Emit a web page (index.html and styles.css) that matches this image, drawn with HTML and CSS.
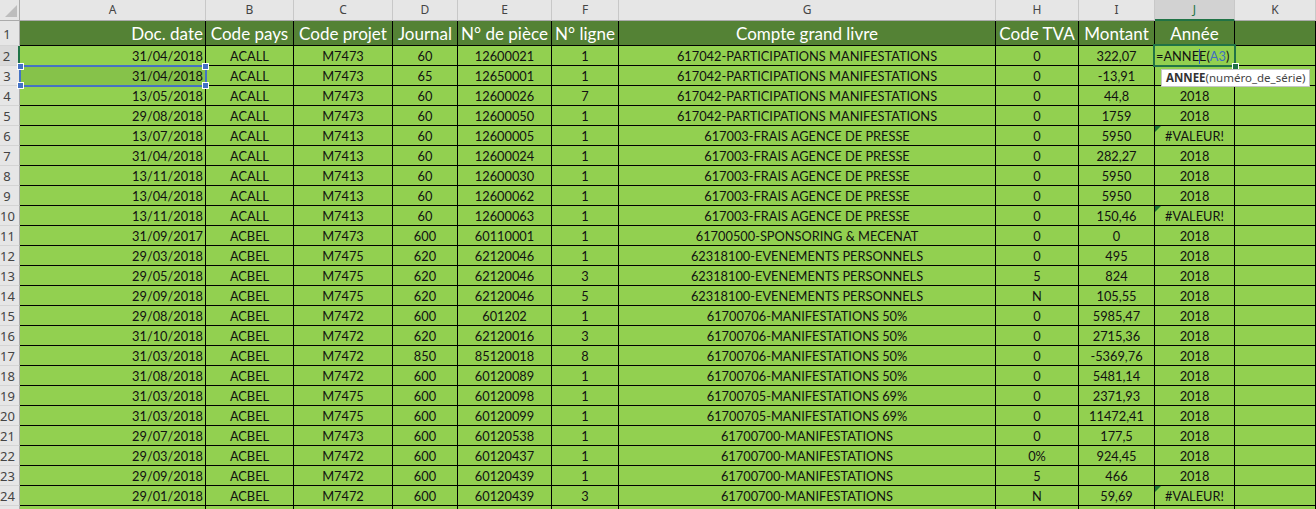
FILE: index.html
```html
<!DOCTYPE html>
<html lang="fr">
<head>
<meta charset="utf-8">
<title>Classeur</title>
<link rel="stylesheet" href="styles.css">
</head>
<body>
<div class="sheet">
  <div class="row colhead">
    <div class="corner"><svg width="19" height="20" viewBox="0 0 19 20"><polygon points="17,5 17,17 5,17" fill="#bdbdbd"/></svg></div>
    <div>A</div><div>B</div><div>C</div><div>D</div><div>E</div><div>F</div><div>G</div><div>H</div><div>I</div><div class="sel">J</div><div>K</div>
  </div>
  <div class="row hdr">
    <div class="rh">1</div>
    <div class="r">Doc. date</div><div>Code pays</div><div>Code projet</div><div>Journal</div><div>N° de pièce</div><div>N° ligne</div><div>Compte grand livre</div><div>Code TVA</div><div>Montant</div><div>Année</div><div></div>
  </div>
  <div class="row data">
    <div class="rh act">2</div>
    <div class="r">31/04/2018</div><div>ACALL</div><div>M7473</div><div>60</div><div>12600021</div><div>1</div><div>617042-PARTICIPATIONS MANIFESTATIONS</div><div>0</div><div>322,07</div><div class="l edit">=ANNE<span class="caret"></span>E(<span class="ref">A3</span>)</div><div></div>
  </div>
  <div class="row data">
    <div class="rh">3</div>
    <div class="r selcell">31/04/2018</div><div>ACALL</div><div>M7473</div><div>65</div><div>12650001</div><div>1</div><div>617042-PARTICIPATIONS MANIFESTATIONS</div><div>0</div><div>-13,91</div><div></div><div></div>
  </div>
  <div class="row data">
    <div class="rh">4</div>
    <div class="r">13/05/2018</div><div>ACALL</div><div>M7473</div><div>60</div><div>12600026</div><div>7</div><div>617042-PARTICIPATIONS MANIFESTATIONS</div><div>0</div><div>44,8</div><div>2018</div><div></div>
  </div>
  <div class="row data">
    <div class="rh">5</div>
    <div class="r">29/08/2018</div><div>ACALL</div><div>M7473</div><div>60</div><div>12600050</div><div>1</div><div>617042-PARTICIPATIONS MANIFESTATIONS</div><div>0</div><div>1759</div><div>2018</div><div></div>
  </div>
  <div class="row data">
    <div class="rh">6</div>
    <div class="r">13/07/2018</div><div>ACALL</div><div>M7413</div><div>60</div><div>12600005</div><div>1</div><div>617003-FRAIS AGENCE DE PRESSE</div><div>0</div><div>5950</div><div class="err">#VALEUR!</div><div></div>
  </div>
  <div class="row data">
    <div class="rh">7</div>
    <div class="r">31/04/2018</div><div>ACALL</div><div>M7413</div><div>60</div><div>12600024</div><div>1</div><div>617003-FRAIS AGENCE DE PRESSE</div><div>0</div><div>282,27</div><div>2018</div><div></div>
  </div>
  <div class="row data">
    <div class="rh">8</div>
    <div class="r">13/11/2018</div><div>ACALL</div><div>M7413</div><div>60</div><div>12600030</div><div>1</div><div>617003-FRAIS AGENCE DE PRESSE</div><div>0</div><div>5950</div><div>2018</div><div></div>
  </div>
  <div class="row data">
    <div class="rh">9</div>
    <div class="r">13/04/2018</div><div>ACALL</div><div>M7413</div><div>60</div><div>12600062</div><div>1</div><div>617003-FRAIS AGENCE DE PRESSE</div><div>0</div><div>5950</div><div>2018</div><div></div>
  </div>
  <div class="row data">
    <div class="rh">10</div>
    <div class="r">13/11/2018</div><div>ACALL</div><div>M7413</div><div>60</div><div>12600063</div><div>1</div><div>617003-FRAIS AGENCE DE PRESSE</div><div>0</div><div>150,46</div><div class="err">#VALEUR!</div><div></div>
  </div>
  <div class="row data">
    <div class="rh">11</div>
    <div class="r">31/09/2017</div><div>ACBEL</div><div>M7473</div><div>600</div><div>60110001</div><div>1</div><div>61700500-SPONSORING &amp; MECENAT</div><div>0</div><div>0</div><div>2018</div><div></div>
  </div>
  <div class="row data">
    <div class="rh">12</div>
    <div class="r">29/03/2018</div><div>ACBEL</div><div>M7475</div><div>620</div><div>62120046</div><div>1</div><div>62318100-EVENEMENTS PERSONNELS</div><div>0</div><div>495</div><div>2018</div><div></div>
  </div>
  <div class="row data">
    <div class="rh">13</div>
    <div class="r">29/05/2018</div><div>ACBEL</div><div>M7475</div><div>620</div><div>62120046</div><div>3</div><div>62318100-EVENEMENTS PERSONNELS</div><div>5</div><div>824</div><div>2018</div><div></div>
  </div>
  <div class="row data">
    <div class="rh">14</div>
    <div class="r">29/09/2018</div><div>ACBEL</div><div>M7475</div><div>620</div><div>62120046</div><div>5</div><div>62318100-EVENEMENTS PERSONNELS</div><div>N</div><div>105,55</div><div>2018</div><div></div>
  </div>
  <div class="row data">
    <div class="rh">15</div>
    <div class="r">29/08/2018</div><div>ACBEL</div><div>M7472</div><div>600</div><div>601202</div><div>1</div><div>61700706-MANIFESTATIONS 50%</div><div>0</div><div>5985,47</div><div>2018</div><div></div>
  </div>
  <div class="row data">
    <div class="rh">16</div>
    <div class="r">31/10/2018</div><div>ACBEL</div><div>M7472</div><div>620</div><div>62120016</div><div>3</div><div>61700706-MANIFESTATIONS 50%</div><div>0</div><div>2715,36</div><div>2018</div><div></div>
  </div>
  <div class="row data">
    <div class="rh">17</div>
    <div class="r">31/03/2018</div><div>ACBEL</div><div>M7472</div><div>850</div><div>85120018</div><div>8</div><div>61700706-MANIFESTATIONS 50%</div><div>0</div><div>-5369,76</div><div>2018</div><div></div>
  </div>
  <div class="row data">
    <div class="rh">18</div>
    <div class="r">31/08/2018</div><div>ACBEL</div><div>M7472</div><div>600</div><div>60120089</div><div>1</div><div>61700706-MANIFESTATIONS 50%</div><div>0</div><div>5481,14</div><div>2018</div><div></div>
  </div>
  <div class="row data">
    <div class="rh">19</div>
    <div class="r">31/03/2018</div><div>ACBEL</div><div>M7475</div><div>600</div><div>60120098</div><div>1</div><div>61700705-MANIFESTATIONS 69%</div><div>0</div><div>2371,93</div><div>2018</div><div></div>
  </div>
  <div class="row data">
    <div class="rh">20</div>
    <div class="r">31/03/2018</div><div>ACBEL</div><div>M7475</div><div>600</div><div>60120099</div><div>1</div><div>61700705-MANIFESTATIONS 69%</div><div>0</div><div>11472,41</div><div>2018</div><div></div>
  </div>
  <div class="row data">
    <div class="rh">21</div>
    <div class="r">29/07/2018</div><div>ACBEL</div><div>M7473</div><div>600</div><div>60120538</div><div>1</div><div>61700700-MANIFESTATIONS</div><div>0</div><div>177,5</div><div>2018</div><div></div>
  </div>
  <div class="row data">
    <div class="rh">22</div>
    <div class="r">29/03/2018</div><div>ACBEL</div><div>M7472</div><div>600</div><div>60120437</div><div>1</div><div>61700700-MANIFESTATIONS</div><div>0%</div><div>924,45</div><div>2018</div><div></div>
  </div>
  <div class="row data">
    <div class="rh">23</div>
    <div class="r">29/09/2018</div><div>ACBEL</div><div>M7472</div><div>600</div><div>60120439</div><div>1</div><div>61700700-MANIFESTATIONS</div><div>5</div><div>466</div><div>2018</div><div></div>
  </div>
  <div class="row data">
    <div class="rh">24</div>
    <div class="r">29/01/2018</div><div>ACBEL</div><div>M7472</div><div>600</div><div>60120439</div><div>3</div><div>61700700-MANIFESTATIONS</div><div>N</div><div>59,69</div><div class="err">#VALEUR!</div><div></div>
  </div>
  <div class="row data">
    <div class="rh"></div>
    <div></div><div></div><div></div><div></div><div></div><div></div><div></div><div></div><div></div><div></div><div></div>
  </div>

  <div class="range"><i class="h tl"></i><i class="h tr"></i><i class="h bl"></i><i class="h br"></i></div>
  <div class="active"><i class="fill"></i></div>
  <div class="tip"><b>ANNEE</b>(numéro_de_série)</div>
</div>
</body>
</html>
```

FILE: styles.css
```css
html, body {
  margin: 0;
  padding: 0;
  background: #ffffff;
  overflow: hidden;
}
body {
  font-family: Lato, "Liberation Sans", sans-serif;
}
.sheet {
  position: relative;
  width: 1316px;
}
.row {
  display: grid;
  grid-template-columns: 20px 186px 88px 99px 65px 94px 67px 377px 83px 76px 80px 81px;
}
.row > div {
  box-sizing: border-box;
  white-space: nowrap;
  overflow: hidden;
}

/* column letters */
.colhead {
  height: 21px;
  background: #e6e6e6;
}
.colhead > div {
  border-right: 1px solid #c8c8c8;
  border-bottom: 1px solid #ababab;
  font: 12px "Noto Sans", sans-serif;
  color: #444;
  text-align: center;
  line-height: 20px;
}
.colhead > .corner {
  border-right: 1px solid #ababab;
  line-height: 0;
}
.colhead > .sel {
  background: #d2d2d2;
  color: #217346;
  border-bottom: 2px solid #217346;
}

/* row numbers */
.rh {
  background: #e6e6e6;
  color: #444;
  font: 13px "Noto Sans", sans-serif;
  text-align: center;
  padding-right: 5px;
}

/* header row */
.hdr {
  height: 25px;
}
.hdr > div {
  background: #548235;
  color: #ffffff;
  border-right: 1px solid #000;
  border-bottom: 1px solid #000;
  font-size: 17px;
  line-height: 25px;
  text-align: center;
}
.hdr > .rh {
  background: #e6e6e6;
  color: #444;
  font-size: 13px;
  border-right: 1px solid #ababab;
  border-bottom: 1px solid #d4d4d4;
  text-align: center;
  line-height: 26px;
}

/* data rows */
.data {
  height: 20px;
}
.data > div {
  background: #92d050;
  color: #111;
  border-right: 1px solid #000;
  border-bottom: 1px solid #000;
  font-size: 12.8px;
  line-height: 21px;
  text-align: center;
}
.data > .rh {
  background: #e6e6e6;
  color: #444;
  font-size: 13px;
  border-right: 1px solid #ababab;
  border-bottom: 1px solid #d4d4d4;
  line-height: 20px;
}
.data > .rh.act {
  border-right: 2px solid #217346;
  background: #dadada;
}
.row > .r {
  text-align: right;
  padding-right: 2px;
}
.row > .l {
  text-align: left;
  padding-left: 2px;
}
.data > .selcell {
  background: #86c24a;
}
.data > .edit {
  font-size: 12.8px;
  line-height: 20px;
  padding-left: 1px;
  color: #111;
}
.ref {
  color: #3f6fc1;
}
.caret {
  display: inline-block;
  width: 0;
  height: 15px;
  margin-right: -1px;
  border-left: 1px solid #2f5fd0;
  vertical-align: -3px;
}
.err {
  position: relative;
}
.err::before {
  content: "";
  position: absolute;
  left: 0;
  top: 0;
  border-top: 6px solid #1e7a32;
  border-right: 6px solid transparent;
}

/* overlays */
.range {
  position: absolute;
  left: 19px;
  top: 65px;
  width: 188px;
  height: 22px;
  box-sizing: border-box;
  border: 2px solid #4472c4;
}
.range .h {
  position: absolute;
  width: 5px;
  height: 5px;
  background: #4472c4;
  box-shadow: 0 0 0 1px #ffffff;
}
.range .tl { left: -3px; top: -3px; }
.range .tr { right: -3px; top: -3px; }
.range .bl { left: -3px; bottom: -3px; }
.range .br { right: -3px; bottom: -3px; }

.active {
  position: absolute;
  left: 1153px;
  top: 44px;
  width: 83px;
  height: 23px;
  box-sizing: border-box;
  border: 2px solid #217346;
}
.active .fill {
  position: absolute;
  right: -4px;
  bottom: -4px;
  width: 5px;
  height: 5px;
  background: #217346;
  box-shadow: 0 0 0 1px #ffffff;
}

.tip {
  position: absolute;
  left: 1161px;
  top: 69px;
  height: 18px;
  box-sizing: border-box;
  padding: 0 4px;
  background: #ffffff;
  border: 1px solid #c6c6c6;
  font: 11.5px "Noto Sans", sans-serif;
  line-height: 16px;
  color: #444;
  white-space: nowrap;
}
.tip b {
  color: #333;
}
```
